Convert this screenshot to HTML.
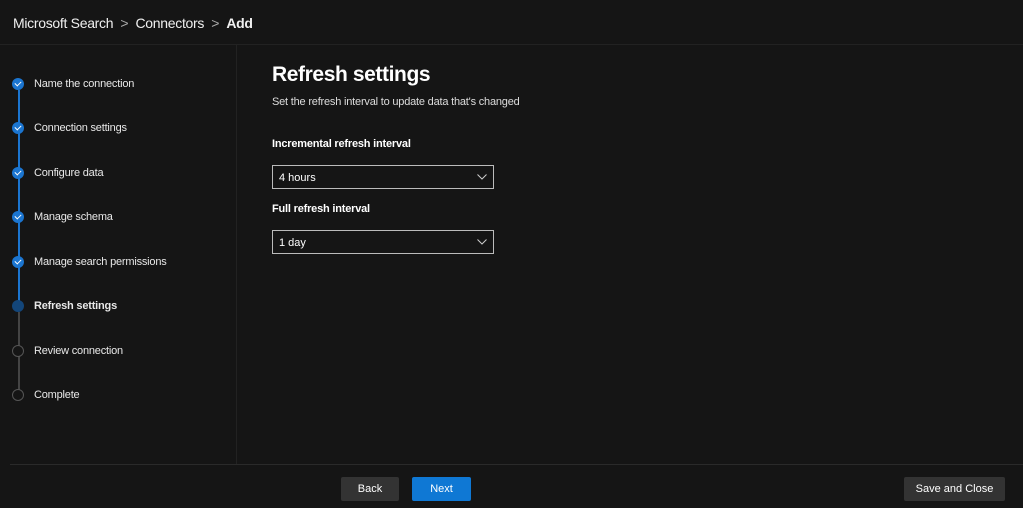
<!DOCTYPE html>
<html><head><style>
*{box-sizing:border-box;margin:0;padding:0}
body{width:1023px;height:508px;background:#151515;color:#fff;font-family:"Liberation Sans",sans-serif;position:relative;overflow:hidden}
.a{position:absolute}
.hdr{left:13px;top:15px;font-size:14px;color:#f0f0f0;letter-spacing:-0.3px}
.sep{left:0;top:44px;width:1023px;height:1px;background:#222}
.side{left:236px;top:45px;width:1px;height:419px;background:#222}
.bot{left:10px;top:464px;width:1013px;height:1px;background:#2a2a2a}
.st{left:34px;font-size:11px;color:#e8e8e8;letter-spacing:-0.2px;margin-top:1px}
.dot{left:12px;width:12px;height:12px;border-radius:50%}
.done{background:#1b75d0}
.done:after{content:"";position:absolute;left:3px;top:3px;width:5px;height:3px;border-left:1.5px solid #fff;border-bottom:1.5px solid #fff;transform:rotate(-45deg)}
.cur{background:#13467a}
.todo{border:1.5px solid #555}
.ln{left:17.5px;width:2px}
.dd{left:272px;width:222px;height:24px;border:1px solid #bbb;font-size:11px;padding:6px 6px}
.dd svg{position:absolute;right:6px;top:8px}
.btn{top:477px;height:24px;font-size:11px;text-align:center;line-height:25px;border-radius:2px}
</style></head><body>
<div class="a hdr">Microsoft Search &nbsp;<span style="color:#aaa">&gt;</span>&nbsp; Connectors &nbsp;<span style="color:#aaa">&gt;</span>&nbsp; <b>Add</b></div>
<div class="a sep"></div><div class="a side"></div><div class="a bot"></div>

<div class="a ln" style="top:90px;height:216px;background:#1b75d0"></div>
<div class="a ln" style="top:312px;height:83px;background:#444"></div>

<div class="a dot done" style="top:78px"></div><div class="a st" style="top:77px">Name the connection</div>
<div class="a dot done" style="top:122px"></div><div class="a st" style="top:121px">Connection settings</div>
<div class="a dot done" style="top:167px"></div><div class="a st" style="top:166px">Configure data</div>
<div class="a dot done" style="top:211px"></div><div class="a st" style="top:210px">Manage schema</div>
<div class="a dot done" style="top:256px"></div><div class="a st" style="top:255px">Manage search permissions</div>
<div class="a dot cur" style="top:300px"></div><div class="a st" style="top:299px;font-weight:bold">Refresh settings</div>
<div class="a dot todo" style="top:345px;background:#151515"></div><div class="a st" style="top:344px">Review connection</div>
<div class="a dot todo" style="top:389px;background:#151515"></div><div class="a st" style="top:388px">Complete</div>

<div class="a" style="left:272px;top:63px;font-size:21px;font-weight:bold;letter-spacing:-0.4px">Refresh settings</div>
<div class="a" style="left:272px;top:96px;font-size:11px;color:#ddd;letter-spacing:-0.2px">Set the refresh interval to update data that's changed</div>
<div class="a" style="left:272px;top:138px;font-size:11px;font-weight:bold;letter-spacing:-0.2px">Incremental refresh interval</div>
<div class="a dd" style="top:165px">4 hours<svg width="10" height="6"><path d="M0.5 0.5L5 5L9.5 0.5" stroke="#ccc" fill="none"/></svg></div>
<div class="a" style="left:272px;top:203px;font-size:11px;font-weight:bold;letter-spacing:-0.2px">Full refresh interval</div>
<div class="a dd" style="top:230px">1 day<svg width="10" height="6"><path d="M0.5 0.5L5 5L9.5 0.5" stroke="#ccc" fill="none"/></svg></div>

<div class="a btn" style="left:341px;width:58px;background:#333">Back</div>
<div class="a btn" style="left:412px;width:59px;background:#0f78d4">Next</div>
<div class="a btn" style="left:904px;width:101px;background:#333">Save and Close</div>
</body></html>
